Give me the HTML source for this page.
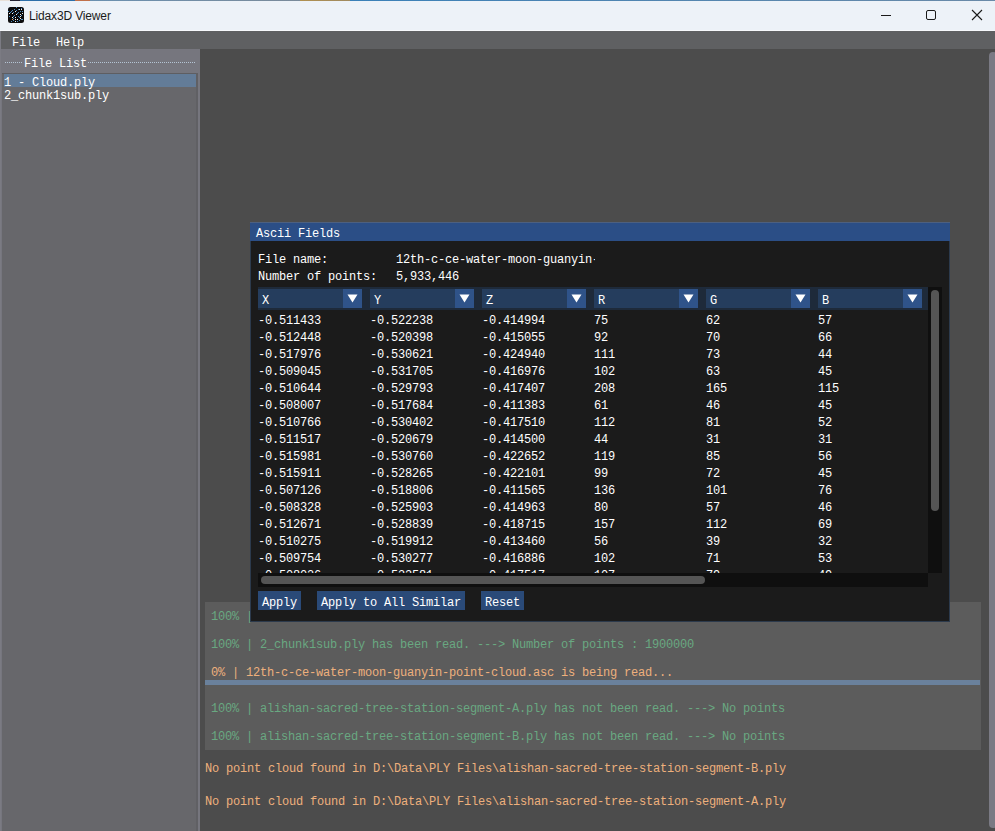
<!DOCTYPE html>
<html><head><meta charset="utf-8">
<style>
html,body{margin:0;padding:0;}
body{width:995px;height:831px;overflow:hidden;position:relative;background:#4c4c4c;}
div{position:absolute;box-sizing:border-box;}
.m{font-family:"Liberation Mono",monospace;font-size:12px;letter-spacing:-0.2px;line-height:13px;white-space:pre;color:#fff;height:13px;}
.g{color:#69a881;}
.o{color:#eeb07c;}
</style></head><body>
<!-- title bar -->
<div style="left:0;top:0;width:995px;height:31px;background:#edf2f8;"></div>
<div style="left:0;top:0;width:995px;height:1px;background:linear-gradient(90deg,#e8e0d8 0,#e8e0d8 10px,#223 10px,#223 20px,#2c6ea8 20px,#2c6ea8 75px,#c0704a 75px,#c0704a 90px,#6a90b0 90px,#7a8a9a 300px,#b09050 300px,#a08a60 350px,#3a80b8 350px,#6a8aa8 995px);"></div>
<div style="left:0;top:30px;width:995px;height:1px;background:#f7f9fc;"></div>
<svg style="position:absolute;left:8px;top:7px" width="16" height="16" viewBox="0 0 16 16"><rect x="0" y="0" width="16" height="16" rx="2.5" fill="#0c0c0e"/><rect x="1" y="6" width="1" height="1" fill="#f4f4f4"/><rect x="4" y="6" width="1" height="1" fill="#f4f4f4"/><rect x="7" y="4" width="1" height="1" fill="#f4f4f4"/><rect x="8" y="7" width="1" height="1" fill="#f4f4f4"/><rect x="11" y="2" width="1" height="1" fill="#f4f4f4"/><rect x="13" y="2" width="1" height="1" fill="#f4f4f4"/><rect x="14" y="6" width="1" height="1" fill="#f4f4f4"/><rect x="12" y="7" width="1" height="1" fill="#f4f4f4"/><rect x="12" y="9" width="1" height="1" fill="#f4f4f4"/><rect x="12" y="11" width="1" height="1" fill="#f4f4f4"/><rect x="4" y="10" width="1" height="1" fill="#f4f4f4"/><rect x="7" y="10" width="1" height="1" fill="#f4f4f4"/><rect x="7" y="12" width="1" height="1" fill="#f4f4f4"/><rect x="9" y="12" width="1" height="1" fill="#f4f4f4"/><rect x="7" y="14" width="1" height="1" fill="#f4f4f4"/><rect x="0" y="4" width="1" height="1" fill="#4f8fc4"/><rect x="4" y="3" width="1" height="1" fill="#4f8fc4"/><rect x="6" y="2" width="1" height="1" fill="#4f8fc4"/><rect x="8" y="3" width="1" height="1" fill="#4f8fc4"/><rect x="10" y="2" width="1" height="1" fill="#4f8fc4"/><rect x="12" y="4" width="1" height="1" fill="#4f8fc4"/><rect x="14" y="4" width="1" height="1" fill="#4f8fc4"/><rect x="10" y="5" width="1" height="1" fill="#4f8fc4"/><rect x="8" y="0" width="1" height="1" fill="#4f8fc4"/><rect x="13" y="1" width="1" height="1" fill="#4f8fc4"/><rect x="5" y="5" width="1" height="1" fill="#4f8fc4"/><rect x="2" y="5" width="1" height="1" fill="#4f8fc4"/><rect x="3" y="4" width="1" height="1" fill="#4f8fc4"/><rect x="6" y="8" width="1" height="1" fill="#4f8fc4"/><rect x="9" y="6" width="1" height="1" fill="#4f8fc4"/><rect x="1" y="9" width="1" height="1" fill="#4f8fc4"/><rect x="5" y="9" width="1" height="1" fill="#4f8fc4"/><rect x="10" y="9" width="1" height="1" fill="#4f8fc4"/><rect x="11" y="10" width="1" height="1" fill="#4f8fc4"/><rect x="13" y="8" width="1" height="1" fill="#4f8fc4"/><rect x="5" y="11" width="1" height="1" fill="#4f8fc4"/><rect x="5" y="13" width="1" height="1" fill="#4f8fc4"/><rect x="3" y="14" width="1" height="1" fill="#4f8fc4"/><rect x="9" y="14" width="1" height="1" fill="#4f8fc4"/><rect x="11" y="13" width="1" height="1" fill="#4f8fc4"/><rect x="13" y="12" width="1" height="1" fill="#4f8fc4"/><rect x="14" y="12" width="1" height="1" fill="#4f8fc4"/><rect x="4" y="12" width="1" height="1" fill="#e8a060"/></svg>
<div style="left:29px;top:8px;font:12px/16px 'Liberation Sans',sans-serif;color:#1b1b1b;white-space:pre;letter-spacing:-0.15px;">Lidax3D Viewer</div>
<div style="left:881px;top:15px;width:10px;height:1px;background:#1a1a1a;"></div>
<div style="left:926px;top:10px;width:10px;height:10px;border:1px solid #1a1a1a;border-radius:2px;"></div>
<svg style="position:absolute;left:971px;top:9px" width="12" height="12" viewBox="0 0 12 12"><path d="M1 1L11 11M11 1L1 11" stroke="#1a1a1a" stroke-width="1.1"/></svg>

<!-- menu bar -->
<div style="left:0;top:31px;width:995px;height:18px;background:#5f6062;"></div>
<div style="left:0;top:31px;width:1px;height:800px;background:#7b7b83;"></div>
<div class="m" style="left:12px;top:37px;">File</div>
<div class="m" style="left:56px;top:37px;">Help</div>

<!-- left panel -->
<div style="left:1px;top:49px;width:199px;height:782px;background:#76767e;"></div>
<div style="left:5px;top:62px;width:18px;height:1px;background:repeating-linear-gradient(90deg,#b4c4d4 0 1px,#76767e 1px 2px);"></div>
<div style="left:88px;top:62px;width:108px;height:1px;background:repeating-linear-gradient(90deg,#b4c4d4 0 1px,#76767e 1px 2px);"></div>
<div class="m" style="left:24px;top:58px;">File List</div>
<div style="left:2px;top:73px;width:196px;height:758px;background:#67676b;border-top:1px solid #5e5e62;"></div>
<div style="left:196px;top:73px;width:2px;height:758px;background:#606064;"></div>
<div style="left:4px;top:74px;width:192px;height:13px;background:#637c98;"></div>
<div class="m" style="left:4px;top:77px;">1 - Cloud.ply</div>
<div class="m" style="left:4px;top:90px;">2_chunk1sub.ply</div>

<!-- main scrollbar -->
<div style="left:989px;top:52px;width:8px;height:776px;background:#7a7a84;border-radius:4px;"></div>

<!-- log panel -->
<div style="left:205px;top:602px;width:776px;height:148px;background:#5c5c5c;"></div>
<div style="left:205px;top:680px;width:775px;height:5px;background:#6a819c;"></div>
<div class="m g" style="left:211px;top:611px;">100% | </div>
<div class="m g" style="left:211px;top:639px;">100% | 2_chunk1sub.ply has been read. ---&gt; Number of points : 1900000</div>
<div class="m o" style="left:211px;top:667px;">0% | 12th-c-ce-water-moon-guanyin-point-cloud.asc is being read...</div>
<div class="m g" style="left:211px;top:703px;">100% | alishan-sacred-tree-station-segment-A.ply has not been read. ---&gt; No points</div>
<div class="m g" style="left:211px;top:731px;">100% | alishan-sacred-tree-station-segment-B.ply has not been read. ---&gt; No points</div>
<div class="m o" style="left:205px;top:763px;">No point cloud found in D:\Data\PLY Files\alishan-sacred-tree-station-segment-B.ply</div>
<div class="m o" style="left:205px;top:796px;">No point cloud found in D:\Data\PLY Files\alishan-sacred-tree-station-segment-A.ply</div>

<!-- modal -->
<div id="modal" style="left:250px;top:222px;width:700px;height:400px;background:#1b1b1b;border:1px solid #2c3a4c;"></div>
<div style="left:250px;top:222px;width:700px;height:19px;background:#2b4e86;"></div>
<div style="left:250px;top:222px;width:700px;height:1px;background:#4d6080;"></div>
<div class="m" style="left:256px;top:228px;">Ascii Fields</div>
<div class="m" style="left:258px;top:254px;">File name:</div>
<div class="m" style="left:396px;top:254px;width:199px;overflow:hidden;">12th-c-ce-water-moon-guanyin-</div>
<div class="m" style="left:258px;top:271px;">Number of points:</div>
<div class="m" style="left:396px;top:271px;">5,933,446</div>

<div id="table"></div>
<div style="left:258px;top:287px;width:670px;height:23px;background:#1e2a3a;"></div>
<div style="left:258px;top:289px;width:104px;height:19px;background:#253d5d;"></div>
<div style="left:343px;top:289px;width:19px;height:19px;background:#2f5389;"></div>
<svg style="position:absolute;left:347px;top:294px" width="11" height="9" viewBox="0 0 11 9"><path d="M0.5 0.5H10.5L5.5 8.5Z" fill="#fff"/></svg>
<div class="m" style="left:262px;top:295px;">X</div>
<div style="left:370px;top:289px;width:104px;height:19px;background:#253d5d;"></div>
<div style="left:455px;top:289px;width:19px;height:19px;background:#2f5389;"></div>
<svg style="position:absolute;left:459px;top:294px" width="11" height="9" viewBox="0 0 11 9"><path d="M0.5 0.5H10.5L5.5 8.5Z" fill="#fff"/></svg>
<div class="m" style="left:374px;top:295px;">Y</div>
<div style="left:482px;top:289px;width:104px;height:19px;background:#253d5d;"></div>
<div style="left:567px;top:289px;width:19px;height:19px;background:#2f5389;"></div>
<svg style="position:absolute;left:571px;top:294px" width="11" height="9" viewBox="0 0 11 9"><path d="M0.5 0.5H10.5L5.5 8.5Z" fill="#fff"/></svg>
<div class="m" style="left:486px;top:295px;">Z</div>
<div style="left:594px;top:289px;width:104px;height:19px;background:#253d5d;"></div>
<div style="left:679px;top:289px;width:19px;height:19px;background:#2f5389;"></div>
<svg style="position:absolute;left:683px;top:294px" width="11" height="9" viewBox="0 0 11 9"><path d="M0.5 0.5H10.5L5.5 8.5Z" fill="#fff"/></svg>
<div class="m" style="left:598px;top:295px;">R</div>
<div style="left:706px;top:289px;width:104px;height:19px;background:#253d5d;"></div>
<div style="left:791px;top:289px;width:19px;height:19px;background:#2f5389;"></div>
<svg style="position:absolute;left:795px;top:294px" width="11" height="9" viewBox="0 0 11 9"><path d="M0.5 0.5H10.5L5.5 8.5Z" fill="#fff"/></svg>
<div class="m" style="left:710px;top:295px;">G</div>
<div style="left:818px;top:289px;width:104px;height:19px;background:#253d5d;"></div>
<div style="left:903px;top:289px;width:19px;height:19px;background:#2f5389;"></div>
<svg style="position:absolute;left:907px;top:294px" width="11" height="9" viewBox="0 0 11 9"><path d="M0.5 0.5H10.5L5.5 8.5Z" fill="#fff"/></svg>
<div class="m" style="left:822px;top:295px;">B</div>
<div style="left:258px;top:310px;width:670px;height:263px;overflow:hidden;">
<div class="m" style="left:0px;top:5px;">-0.511433</div>
<div class="m" style="left:112px;top:5px;">-0.522238</div>
<div class="m" style="left:224px;top:5px;">-0.414994</div>
<div class="m" style="left:336px;top:5px;">75</div>
<div class="m" style="left:448px;top:5px;">62</div>
<div class="m" style="left:560px;top:5px;">57</div>
<div class="m" style="left:0px;top:22px;">-0.512448</div>
<div class="m" style="left:112px;top:22px;">-0.520398</div>
<div class="m" style="left:224px;top:22px;">-0.415055</div>
<div class="m" style="left:336px;top:22px;">92</div>
<div class="m" style="left:448px;top:22px;">70</div>
<div class="m" style="left:560px;top:22px;">66</div>
<div class="m" style="left:0px;top:39px;">-0.517976</div>
<div class="m" style="left:112px;top:39px;">-0.530621</div>
<div class="m" style="left:224px;top:39px;">-0.424940</div>
<div class="m" style="left:336px;top:39px;">111</div>
<div class="m" style="left:448px;top:39px;">73</div>
<div class="m" style="left:560px;top:39px;">44</div>
<div class="m" style="left:0px;top:56px;">-0.509045</div>
<div class="m" style="left:112px;top:56px;">-0.531705</div>
<div class="m" style="left:224px;top:56px;">-0.416976</div>
<div class="m" style="left:336px;top:56px;">102</div>
<div class="m" style="left:448px;top:56px;">63</div>
<div class="m" style="left:560px;top:56px;">45</div>
<div class="m" style="left:0px;top:73px;">-0.510644</div>
<div class="m" style="left:112px;top:73px;">-0.529793</div>
<div class="m" style="left:224px;top:73px;">-0.417407</div>
<div class="m" style="left:336px;top:73px;">208</div>
<div class="m" style="left:448px;top:73px;">165</div>
<div class="m" style="left:560px;top:73px;">115</div>
<div class="m" style="left:0px;top:90px;">-0.508007</div>
<div class="m" style="left:112px;top:90px;">-0.517684</div>
<div class="m" style="left:224px;top:90px;">-0.411383</div>
<div class="m" style="left:336px;top:90px;">61</div>
<div class="m" style="left:448px;top:90px;">46</div>
<div class="m" style="left:560px;top:90px;">45</div>
<div class="m" style="left:0px;top:107px;">-0.510766</div>
<div class="m" style="left:112px;top:107px;">-0.530402</div>
<div class="m" style="left:224px;top:107px;">-0.417510</div>
<div class="m" style="left:336px;top:107px;">112</div>
<div class="m" style="left:448px;top:107px;">81</div>
<div class="m" style="left:560px;top:107px;">52</div>
<div class="m" style="left:0px;top:124px;">-0.511517</div>
<div class="m" style="left:112px;top:124px;">-0.520679</div>
<div class="m" style="left:224px;top:124px;">-0.414500</div>
<div class="m" style="left:336px;top:124px;">44</div>
<div class="m" style="left:448px;top:124px;">31</div>
<div class="m" style="left:560px;top:124px;">31</div>
<div class="m" style="left:0px;top:141px;">-0.515981</div>
<div class="m" style="left:112px;top:141px;">-0.530760</div>
<div class="m" style="left:224px;top:141px;">-0.422652</div>
<div class="m" style="left:336px;top:141px;">119</div>
<div class="m" style="left:448px;top:141px;">85</div>
<div class="m" style="left:560px;top:141px;">56</div>
<div class="m" style="left:0px;top:158px;">-0.515911</div>
<div class="m" style="left:112px;top:158px;">-0.528265</div>
<div class="m" style="left:224px;top:158px;">-0.422101</div>
<div class="m" style="left:336px;top:158px;">99</div>
<div class="m" style="left:448px;top:158px;">72</div>
<div class="m" style="left:560px;top:158px;">45</div>
<div class="m" style="left:0px;top:175px;">-0.507126</div>
<div class="m" style="left:112px;top:175px;">-0.518806</div>
<div class="m" style="left:224px;top:175px;">-0.411565</div>
<div class="m" style="left:336px;top:175px;">136</div>
<div class="m" style="left:448px;top:175px;">101</div>
<div class="m" style="left:560px;top:175px;">76</div>
<div class="m" style="left:0px;top:192px;">-0.508328</div>
<div class="m" style="left:112px;top:192px;">-0.525903</div>
<div class="m" style="left:224px;top:192px;">-0.414963</div>
<div class="m" style="left:336px;top:192px;">80</div>
<div class="m" style="left:448px;top:192px;">57</div>
<div class="m" style="left:560px;top:192px;">46</div>
<div class="m" style="left:0px;top:209px;">-0.512671</div>
<div class="m" style="left:112px;top:209px;">-0.528839</div>
<div class="m" style="left:224px;top:209px;">-0.418715</div>
<div class="m" style="left:336px;top:209px;">157</div>
<div class="m" style="left:448px;top:209px;">112</div>
<div class="m" style="left:560px;top:209px;">69</div>
<div class="m" style="left:0px;top:226px;">-0.510275</div>
<div class="m" style="left:112px;top:226px;">-0.519912</div>
<div class="m" style="left:224px;top:226px;">-0.413460</div>
<div class="m" style="left:336px;top:226px;">56</div>
<div class="m" style="left:448px;top:226px;">39</div>
<div class="m" style="left:560px;top:226px;">32</div>
<div class="m" style="left:0px;top:243px;">-0.509754</div>
<div class="m" style="left:112px;top:243px;">-0.530277</div>
<div class="m" style="left:224px;top:243px;">-0.416886</div>
<div class="m" style="left:336px;top:243px;">102</div>
<div class="m" style="left:448px;top:243px;">71</div>
<div class="m" style="left:560px;top:243px;">53</div>
<div class="m" style="left:0px;top:260px;">-0.508026</div>
<div class="m" style="left:112px;top:260px;">-0.533581</div>
<div class="m" style="left:224px;top:260px;">-0.417517</div>
<div class="m" style="left:336px;top:260px;">107</div>
<div class="m" style="left:448px;top:260px;">79</div>
<div class="m" style="left:560px;top:260px;">49</div>
</div>
<div style="left:928px;top:287px;width:14px;height:286px;background:#0f0f0f;"></div>
<div style="left:931px;top:290px;width:8px;height:221px;background:#555;border-radius:4px;"></div>
<div style="left:258px;top:573px;width:670px;height:14px;background:#0f0f0f;"></div>
<div style="left:261px;top:576px;width:444px;height:8px;background:#555;border-radius:4px;"></div>
<div style="left:258px;top:591px;width:43px;height:19px;background:#2a4a78;"></div>
<div class="m" style="left:262px;top:597px;">Apply</div>
<div style="left:317px;top:591px;width:148px;height:19px;background:#2a4a78;"></div>
<div class="m" style="left:321px;top:597px;">Apply to All Similar</div>
<div style="left:481px;top:591px;width:43px;height:19px;background:#2a4a78;"></div>
<div class="m" style="left:485px;top:597px;">Reset</div>
</body></html>
